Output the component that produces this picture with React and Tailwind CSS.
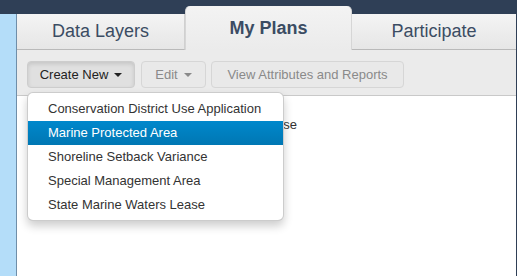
import React from "react";

const Caret = ({ color = "#333" }) => (
  <span
    className="inline-block w-0 h-0 ml-[6px] align-middle border-l-[4px] border-r-[4px] border-t-[4px] border-l-transparent border-r-transparent"
    style={{ borderTopColor: color }}
  />
);

export default function App() {
  const items = [
    "Conservation District Use Application",
    "Marine Protected Area",
    "Shoreline Setback Variance",
    "Special Management Area",
    "State Marine Waters Lease",
  ];
  return (
    <div
      className="w-[517px] h-[276px] flex overflow-hidden bg-[#2f3f56]"
      style={{ fontFamily: '"Liberation Sans", Arial, sans-serif' }}
    >
      <div className="w-[17px] mt-[14px] bg-[#b4ddf9] border-r border-[#6f8ea9]" />
      <div className="flex-1 mr-[1px] flex flex-col">
        <div className="h-[50px] grid grid-cols-[168px_167px_1fr] items-end">
          <div className="h-[36px] flex items-center justify-center bg-gradient-to-b from-[#f4f4f4] to-[#e6e6e6] border-b border-[#b9b9b9] border-r border-r-[#d0d0d0] text-[18px] text-[#3b4c63]">
            Data Layers
          </div>
          <div className="h-[44px] flex items-center justify-center rounded-t-[5px] bg-gradient-to-b from-[#f3f3f3] to-[#ebebeb] border-l border-r border-[#d6d6d6] text-[18px] font-bold text-[#3b4c63]">
            My Plans
          </div>
          <div className="h-[36px] flex items-center justify-center bg-gradient-to-b from-[#f4f4f4] to-[#e6e6e6] border-b border-[#b9b9b9] text-[18px] text-[#3b4c63]">
            Participate
          </div>
        </div>
        <div className="relative h-[46px] bg-[#ebebeb] border-b border-[#c9c9c9] flex items-start pt-[11px] pl-[10px] text-[13px]">
          <div className="w-[108px] h-[27px] flex items-center justify-center rounded-[4px] bg-[#e0e0e0] border border-[#cdcdcd] shadow-[inset_0_2px_4px_rgba(0,0,0,0.12)] text-[#222]">
            Create New
            <Caret color="#222" />
          </div>
          <div className="ml-[6px] w-[65px] h-[27px] flex items-center justify-center rounded-[4px] bg-[#e9e9e9] border border-[#d6d6d6] text-[#8a8a8a]">
            Edit
            <Caret color="#8a8a8a" />
          </div>
          <div className="ml-[5px] w-[193px] h-[27px] flex items-center justify-center rounded-[4px] bg-[#e9e9e9] border border-[#d6d6d6] text-[#8a8a8a]">
            View Attributes and Reports
          </div>
          <div className="absolute left-[10px] top-[42px] z-10 w-[257px] bg-white border border-[rgba(0,0,0,0.2)] rounded-[6px] shadow-[0_5px_10px_rgba(0,0,0,0.2)] pt-[4px] pb-[3px]">
            {items.map((t, i) => (
              <div
                key={t}
                className={
                  i === 1
                    ? "h-[24px] leading-[24px] pl-[20px] text-[13px] text-white bg-gradient-to-b from-[#0088cc] to-[#0077b3]"
                    : "h-[24px] leading-[24px] pl-[20px] text-[13px] text-[#333]"
                }
              >
                {t}
              </div>
            ))}
          </div>
        </div>
        <div className="flex-1 bg-white">
          <div className="mt-[20px] ml-[10px] w-[270px] text-right text-[13px] leading-[18px] text-[#333]">
            Lease
          </div>
        </div>
      </div>
    </div>
  );
}
